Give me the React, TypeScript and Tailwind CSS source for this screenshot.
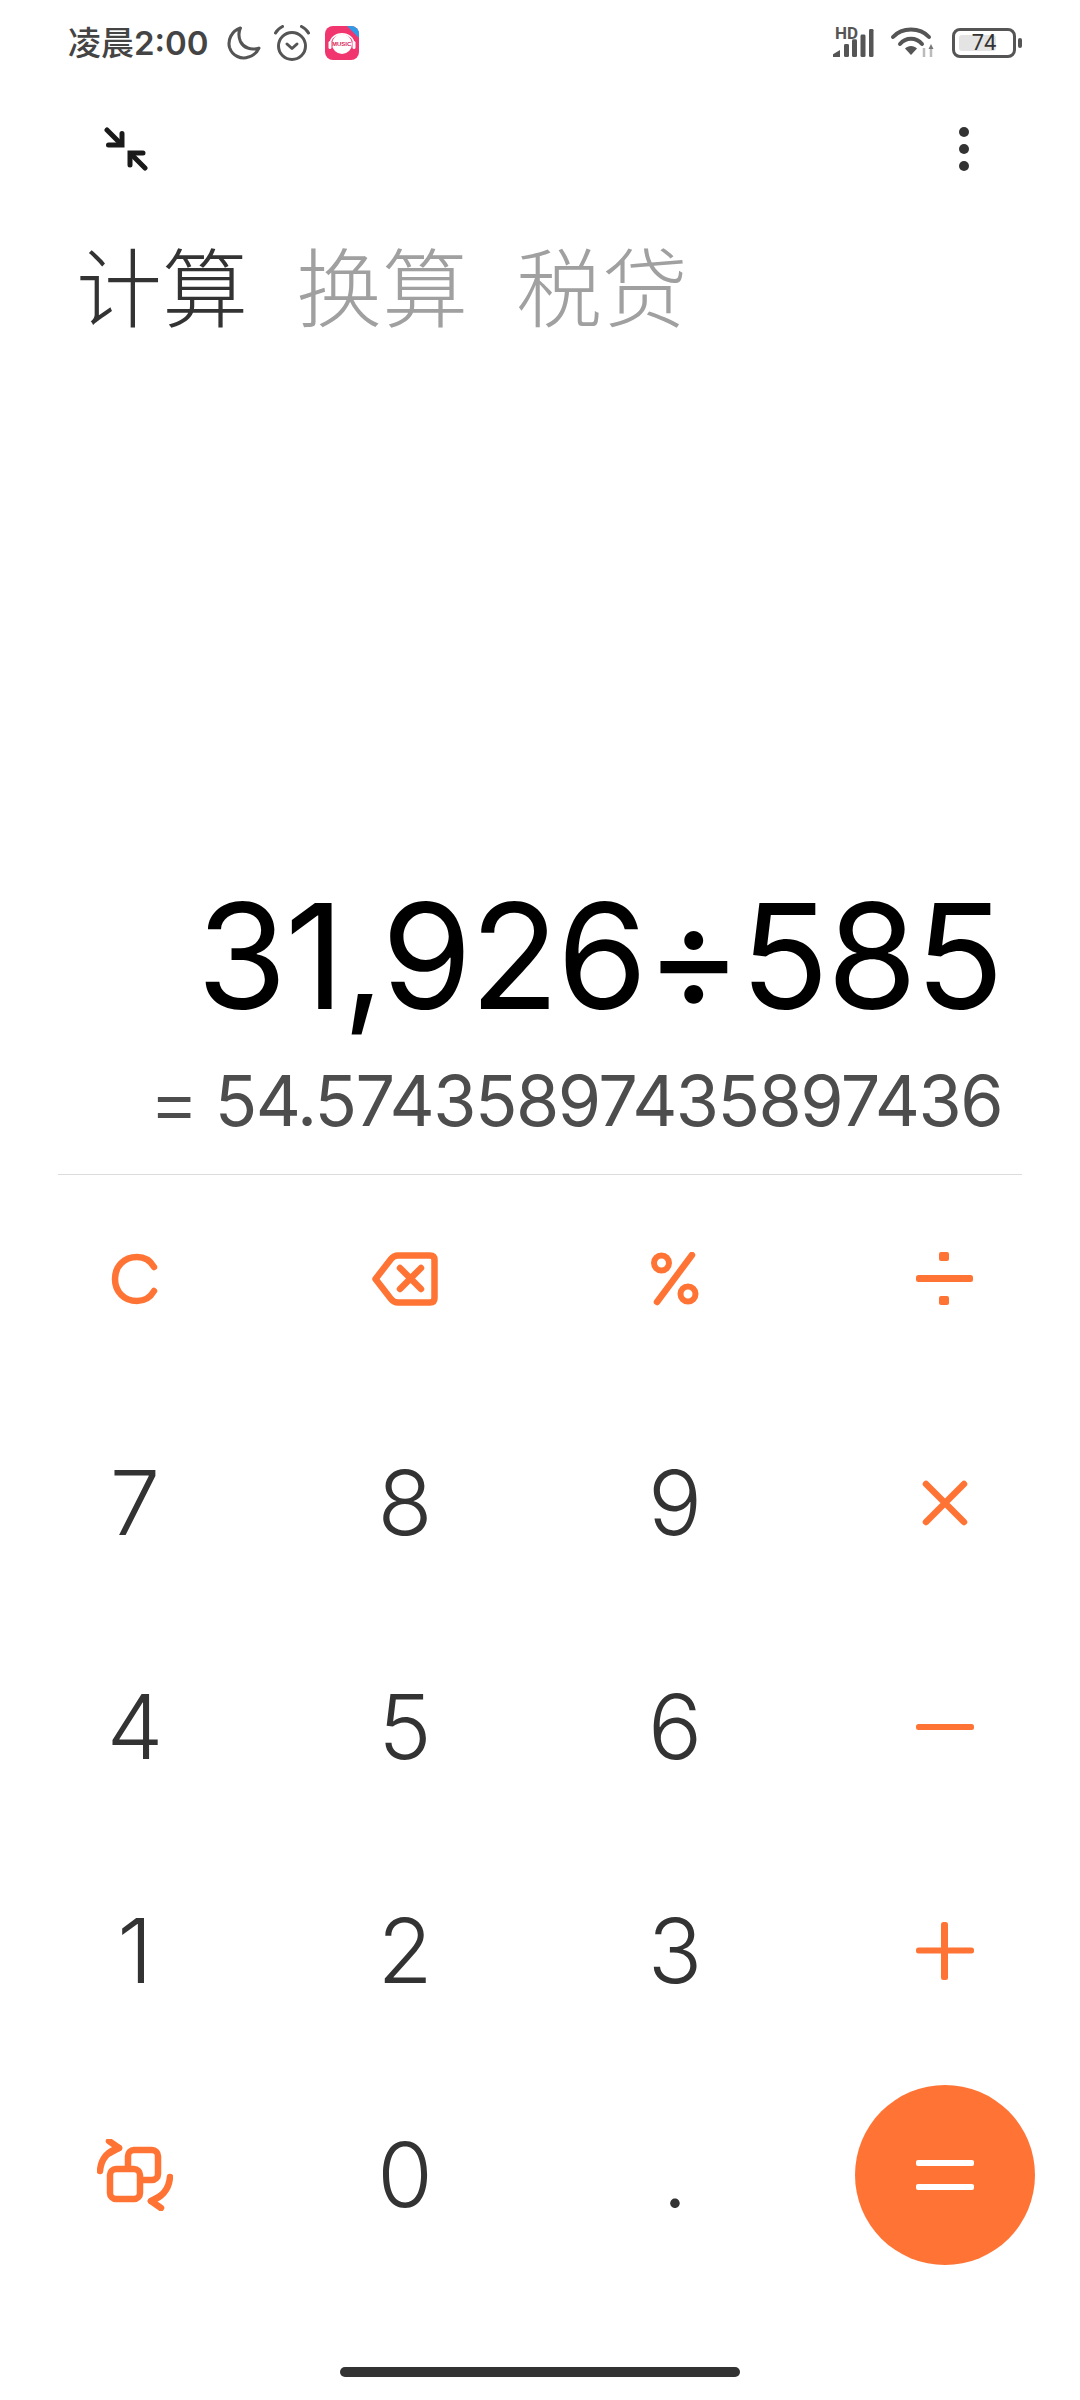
const ORANGE = "#ff7435";

function Moon() {
  return (
    <svg width="35" height="35" viewBox="0 0 34 34" fill="none" stroke="#555" strokeWidth="3">
      <path d="M14 2 C5 5 1.500 14 3.500 21 C6 29 15 33 22 30 C26 29 30 26 32 21.500 C24 24 17 21 14 15 C12 10 12 6 14 2 Z" strokeLinejoin="round" />
    </svg>
  );
}

function Alarm() {
  return (
    <svg width="36" height="36" viewBox="0 0 36 36" fill="none" stroke="#555" strokeWidth="3" strokeLinecap="round" strokeLinejoin="round">
      <circle cx="18" cy="21" r="13.500" />
      <path d="M1.500 8 C3 5 5.500 3 8.500 1.500" />
      <path d="M34.500 8 C33 5 30.500 3 27.500 1.500" />
      <path d="M13 19 L18 23.500 L23 19" />
    </svg>
  );
}

function MusicApp() {
  return (
    <div className="relative w-[34px] h-[34px] rounded-[8px] overflow-hidden bg-[#f1356f]">
      <svg width="34" height="34" viewBox="0 0 34 34" className="absolute inset-0">
        <path d="M22 0 H34 V12 Z" fill="#2d9be6" />
        <circle cx="17" cy="18" r="10" fill="#fff" />
        <path d="M5 19 C5 4 29 4 29 19" fill="none" stroke="#fff" strokeWidth="1.500" />
        <rect x="3.500" y="15" width="3" height="8" rx="1.500" fill="#fff" />
        <rect x="27.500" y="15" width="3" height="8" rx="1.500" fill="#fff" />
      </svg>
      <span className="absolute left-0 right-0 top-[14px] text-center text-[6px] leading-[8px] font-bold text-[#d81f5a] [font-family:'Liberation_Sans',sans-serif]">
        MUSIC
      </span>
    </div>
  );
}

function Signal() {
  return (
    <svg width="42" height="30" viewBox="0 0 42 32" fill="#555" preserveAspectRatio="none">
      <path d="M1 31 V28 L8 23.500 V31 Z" />
      <rect x="12" y="17" width="5" height="14" rx="1.500" />
      <rect x="20" y="12" width="5" height="19" rx="1.500" />
      <rect x="28.500" y="7" width="5" height="24" rx="1.500" />
      <rect x="37" y="1" width="4.500" height="30" rx="1.500" />
    </svg>
  );
}

function Wifi() {
  return (
    <svg width="46" height="34" viewBox="0 0 46 34" fill="none">
      <g stroke="#555" strokeWidth="4" strokeLinecap="round">
        <path d="M3 11 C12 1 30 1 39 11" />
        <path d="M10 18 C16 11 26 11 32 18" />
      </g>
      <path d="M15 22.500 C18 19 24 19 27 22.500 L21 29 Z" fill="#555" />
      <path d="M34 31 V22 M41 31 V22" stroke="#bbb" strokeWidth="2.500" />
      <path d="M41 18 L38.500 23 H43.500 Z" fill="#777" />
    </svg>
  );
}

function Battery() {
  return (
    <div className="flex items-center gap-[2px]">
      <div className="relative w-[64px] h-[30px] rounded-[8px] border-[3px] border-[#555] p-[4px]">
        <div className="h-full w-[74%] rounded-[3px] bg-[#e4e4e4]" />
        <span className="absolute inset-0 flex items-center justify-center text-[22px] leading-none text-[#333]">74</span>
      </div>
      <div className="w-[4px] h-[10px] rounded-full bg-[#555]" />
    </div>
  );
}

function Collapse() {
  return (
    <svg width="44" height="44" viewBox="0 0 44 44" fill="none" stroke="#1a1a1a" strokeWidth="5" strokeLinecap="round" strokeLinejoin="miter">
      <path d="M3 3 L17 17" />
      <path d="M18 6.500 V18 H4.500" />
      <path d="M41 41 L27 27" />
      <path d="M26 38 V26 H39" />
    </svg>
  );
}

function Clear() {
  return (
    <svg width="48" height="52" viewBox="0 0 48 52" fill="none" stroke={ORANGE} strokeWidth="6.500" strokeLinecap="round">
      <path d="M43 14 C39 7 33 4 26 4 C13 4 4 13.500 4 26 C4 38.500 13 48 26 48 C33 48 39 45 43 38" />
    </svg>
  );
}

function Backspace() {
  return (
    <svg width="66" height="54" viewBox="0 0 66 54" fill="none" stroke={ORANGE} strokeWidth="6.500" strokeLinecap="round" strokeLinejoin="round">
      <path d="M3.500 27 L19 7 C21 4.500 23 3.500 26 3.500 H58 C61 3.500 62.500 5 62.500 8 V46 C62.500 49 61 50.500 58 50.500 H26 C23 50.500 21 49.500 19 47 Z" />
      <path d="M28 16 L49 37 M49 16 L28 37" />
    </svg>
  );
}

function Percent() {
  return (
    <svg width="48" height="54" viewBox="0 0 48 54" fill="none" stroke={ORANGE}>
      <circle cx="10.500" cy="11" r="7.500" strokeWidth="6" />
      <circle cx="37" cy="42" r="7.500" strokeWidth="6" />
      <path d="M41 3 L6 50" strokeWidth="6.500" strokeLinecap="round" />
    </svg>
  );
}

function Divide() {
  return (
    <svg width="58" height="54" viewBox="0 0 58 54" fill={ORANGE}>
      <rect x="23" y="0" width="10" height="9" rx="2" />
      <rect x="0" y="23" width="57" height="7" rx="2.500" />
      <rect x="23" y="44" width="10" height="9" rx="2" />
    </svg>
  );
}

function Times() {
  return (
    <svg width="46" height="46" viewBox="0 0 46 46" fill="none" stroke={ORANGE} strokeWidth="6.500" strokeLinecap="round">
      <path d="M4 4 L42 42 M42 4 L4 42" />
    </svg>
  );
}

function Minus() {
  return (
    <svg width="58" height="8" viewBox="0 0 58 8" fill={ORANGE}>
      <rect width="58" height="6" y="1" rx="2.500" />
    </svg>
  );
}

function Plus() {
  return (
    <svg width="58" height="58" viewBox="0 0 58 58" fill={ORANGE}>
      <rect y="25.500" width="58" height="6" rx="2.500" />
      <rect x="25" width="7" height="58" rx="2.500" />
    </svg>
  );
}

function Equals() {
  return (
    <svg width="58" height="30" viewBox="0 0 58 30" fill="#fff">
      <rect y="0" width="58" height="6" rx="2" />
      <rect y="24" width="58" height="6" rx="2" />
    </svg>
  );
}

function Switch() {
  return (
    <svg width="76" height="72" viewBox="0 0 76 72" fill="none" stroke={ORANGE} strokeWidth="6.500" strokeLinecap="round" strokeLinejoin="round">
      <rect x="31" y="11" width="30" height="30" rx="6" fill="#fff" />
      <rect x="13" y="30" width="30" height="30" rx="6" fill="#fff" />
      <path d="M3 32 C4 20 11 12 22 9" />
      <path d="M12 2 L22 9 L13 14" />
      <path d="M73 38 C72 50 65 58 54 62" />
      <path d="M64 69 L54 62 L63 57" />
    </svg>
  );
}

function Digit({ value }: { value: string }) {
  return <span className="text-[#333] text-[90px] leading-none font-[360] [font-family:Inter,sans-serif]">{value}</span>;
}

const keys = [
  <Clear />, <Backspace />, <Percent />, <Divide />,
  <Digit value="7" />, <Digit value="8" />, <Digit value="9" />, <Times />,
  <Digit value="4" />, <Digit value="5" />, <Digit value="6" />, <Minus />,
  <Digit value="1" />, <Digit value="2" />, <Digit value="3" />, <Plus />,
  <Switch />, <Digit value="0" />, <Digit value="." />,
  <div className="w-[180px] h-[180px] rounded-full bg-[#ff7435] flex items-center justify-center"><Equals /></div>,
];

export default function App() {
  return (
    <div className="relative w-[1080px] h-[2400px] bg-white flex flex-col font-['Roboto','Noto_Sans_CJK_SC',sans-serif] overflow-hidden">
      {/* Status bar */}
      <div className="h-[86px] pl-[68px] pr-[58px] flex items-center justify-between">
        <div className="flex items-center">
          <span className="text-[33px] leading-none text-[#444] mr-[17px] font-['Inter','Noto_Sans_CJK_SC',sans-serif]">
            <span className="font-medium">凌晨</span>
            <span className="font-semibold">2:00</span>
          </span>
          <div className="flex items-center gap-[13px]">
            <Moon />
            <Alarm />
            <div className="ml-[2px]"><MusicApp /></div>
          </div>
        </div>
        <div className="flex items-center gap-[16px]">
          <div className="relative">
            <span className="absolute left-[3px] top-[-3px] text-[17px] leading-none font-bold text-[#555]">HD</span>
            <Signal />
          </div>
          <Wifi />
          <Battery />
        </div>
      </div>

      {/* Toolbar */}
      <div className="h-[60px] mt-[33px] pl-[104px] pr-[111px] flex items-center justify-between">
        <Collapse />
        <div className="flex flex-col gap-[7px]">
          <div className="w-[10px] h-[10px] rounded-full bg-[#333]" />
          <div className="w-[10px] h-[10px] rounded-full bg-[#333]" />
          <div className="w-[10px] h-[10px] rounded-full bg-[#333]" />
        </div>
      </div>

      {/* Tabs */}
      <div className="mt-[58px] pl-[76px] flex gap-[48px] text-[86px] leading-[110px] font-light text-[#a0a0a0]">
        <span className="text-[#333]">计算</span>
        <span>换算</span>
        <span>税贷</span>
      </div>

      {/* Display */}
      <div className="flex-1 flex flex-col justify-end items-end pr-[78px] [font-family:Inter,sans-serif]">
        <div className="text-[146px] leading-[180px] font-[370] tracking-[-2px] text-black whitespace-nowrap">31,926÷585</div>
        <div className="mt-[10px] flex items-center gap-[16px] text-[70px] leading-[90px] font-[370] tracking-[-1.550px] text-[#4d4d4d] whitespace-nowrap">
          <span className="text-[80px] font-light">=</span>
          <span>54.57435897435897436</span>
        </div>
      </div>

      <div className="mx-[58px] mt-[28px] h-[1px] bg-[#dcdcdc]" />

      {/* Keypad */}
      <div className="-mt-[8px] grid grid-cols-4 auto-rows-[224px] mb-[113px]">
        {keys.map((k, i) => (
          <div key={i} className="flex items-center justify-center">{k}</div>
        ))}
      </div>

      <div className="absolute left-[340px] top-[2367px] w-[400px] h-[10px] rounded-full bg-[#333]" />
    </div>
  );
}
